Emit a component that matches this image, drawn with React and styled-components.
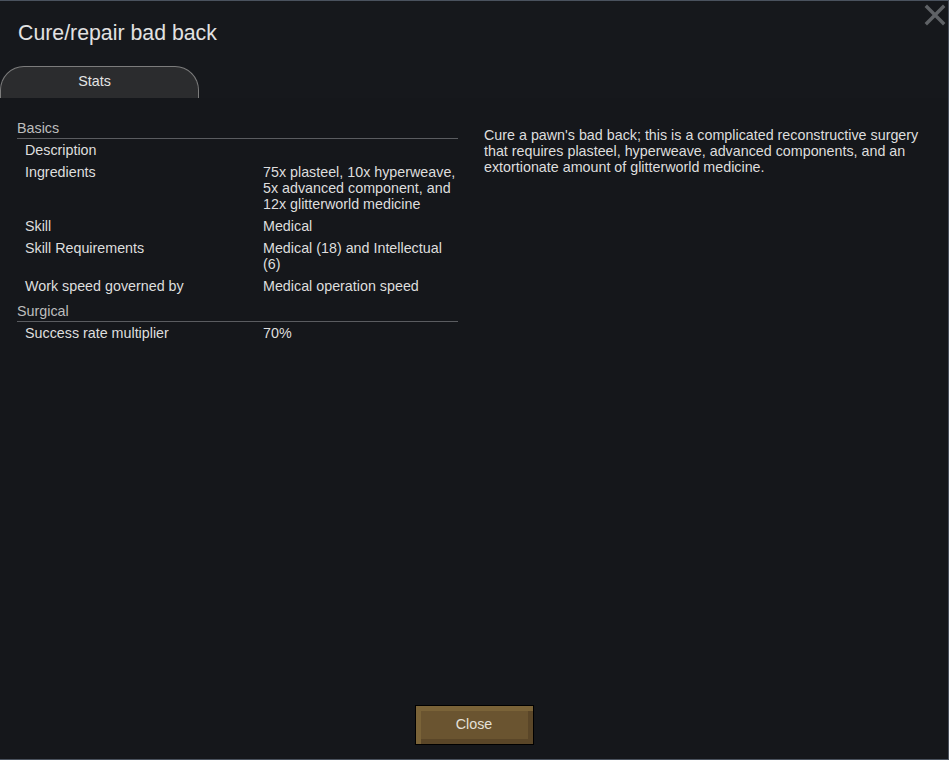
import React from "react";
import styled, { createGlobalStyle } from "styled-components";

const Global = createGlobalStyle`
  html, body { margin: 0; padding: 0; background: #16181c; }
  body { font-family: "Liberation Sans", Arial, sans-serif; }
  * { box-sizing: border-box; }
`;

const Window = styled.div`
  position: relative;
  width: 949px;
  height: 760px;
  background: #16181c;
  border-top: 1px solid #4a525e;
  border-right: 1px solid #4a525e;
  border-bottom: 1px solid #4a525e;
  display: flex;
  flex-direction: column;
  color: #dcdcdc;
  overflow: hidden;
`;

const Title = styled.h1`
  margin: 0;
  padding: 20px 0 0 18px;
  height: 65px;
  font-size: 21.3px;
  line-height: 24px;
  font-weight: normal;
  color: #e2e2e2;
`;

const CloseX = styled.button`
  position: absolute;
  top: 3px;
  right: 2px;
  width: 22px;
  height: 22px;
  padding: 0;
  border: none;
  background: transparent;
  display: flex;
`;

const TabBar = styled.div`
  display: flex;
  height: 32px;
`;

const Tab = styled.div`
  width: 199px;
  height: 32px;
  padding-right: 10px;
  background: #2b2c2e;
  border: 1px solid #7c7c7c;
  border-bottom: none;
  border-radius: 24px 24px 0 0;
  font-size: 14.3px;
  line-height: 28px;
  text-align: center;
  color: #e4e4e4;
`;

const Content = styled.div`
  flex: 1;
  display: flex;
  padding: 16px 0 0 17px;
  background: #15171b;
`;

const Stats = styled.div`
  width: 441px;
  flex: none;
`;

const SectionHead = styled.div`
  padding: 6px 0 2px;
  line-height: 16px;
  font-size: 14.3px;
  color: #bdbdbd;
  border-bottom: 1px solid #5a5c60;
`;

const Row = styled.div`
  display: grid;
  grid-template-columns: 238px 1fr;
  padding: 3px 0 3px 8px;
  line-height: 16px;
  font-size: 14.3px;
  color: #dedede;
`;

const Desc = styled.p`
  margin: 13px 0 0 26px;
  width: 445px;
  font-size: 14.3px;
  line-height: 16px;
  color: #dedede;
`;

const Footer = styled.div`
  display: flex;
  justify-content: center;
  padding-bottom: 14px;
  background: #15171b;
`;

const Button = styled.button`
  width: 119px;
  height: 40px;
  border: 1px solid #000;
  background: #6a5430;
  box-shadow: inset 5px 5px 0 #7a6338, inset -5px -5px 0 #5a4628;
  font-family: "Liberation Sans", Arial, sans-serif;
  font-size: 14.3px;
  line-height: 16px;
  color: #e4e0d8;
  padding: 0 0 2px;
`;

const stats = [
  { head: "Basics", rows: [
    ["Description", ""],
    ["Ingredients", "75x plasteel, 10x hyperweave, 5x advanced component, and 12x glitterworld medicine"],
    ["Skill", "Medical"],
    ["Skill Requirements", "Medical (18) and Intellectual (6)"],
    ["Work speed governed by", "Medical operation speed"],
  ]},
  { head: "Surgical", rows: [["Success rate multiplier", "70%"]] },
];

export default function App() {
  return (
    <Window>
      <Global />
      <CloseX aria-label="close">
        <svg width="22" height="22" viewBox="0 0 22 22">
          <path d="M3 3 L19 19 M19 3 L3 19" stroke="#5f6266" strokeWidth="3.4" strokeLinecap="square" />
        </svg>
      </CloseX>
      <Title>Cure/repair bad back</Title>
      <TabBar>
        <Tab>Stats</Tab>
      </TabBar>
      <Content>
        <Stats>
          {stats.map((s) => (
            <div key={s.head}>
              <SectionHead>{s.head}</SectionHead>
              {s.rows.map(([k, v]) => (
                <Row key={k}>
                  <span>{k}</span>
                  <span>{v}</span>
                </Row>
              ))}
            </div>
          ))}
        </Stats>
        <Desc>
          Cure a pawn's bad back; this is a complicated reconstructive surgery that requires plasteel, hyperweave, advanced components, and an extortionate amount of glitterworld medicine.
        </Desc>
      </Content>
      <Footer>
        <Button>Close</Button>
      </Footer>
    </Window>
  );
}
